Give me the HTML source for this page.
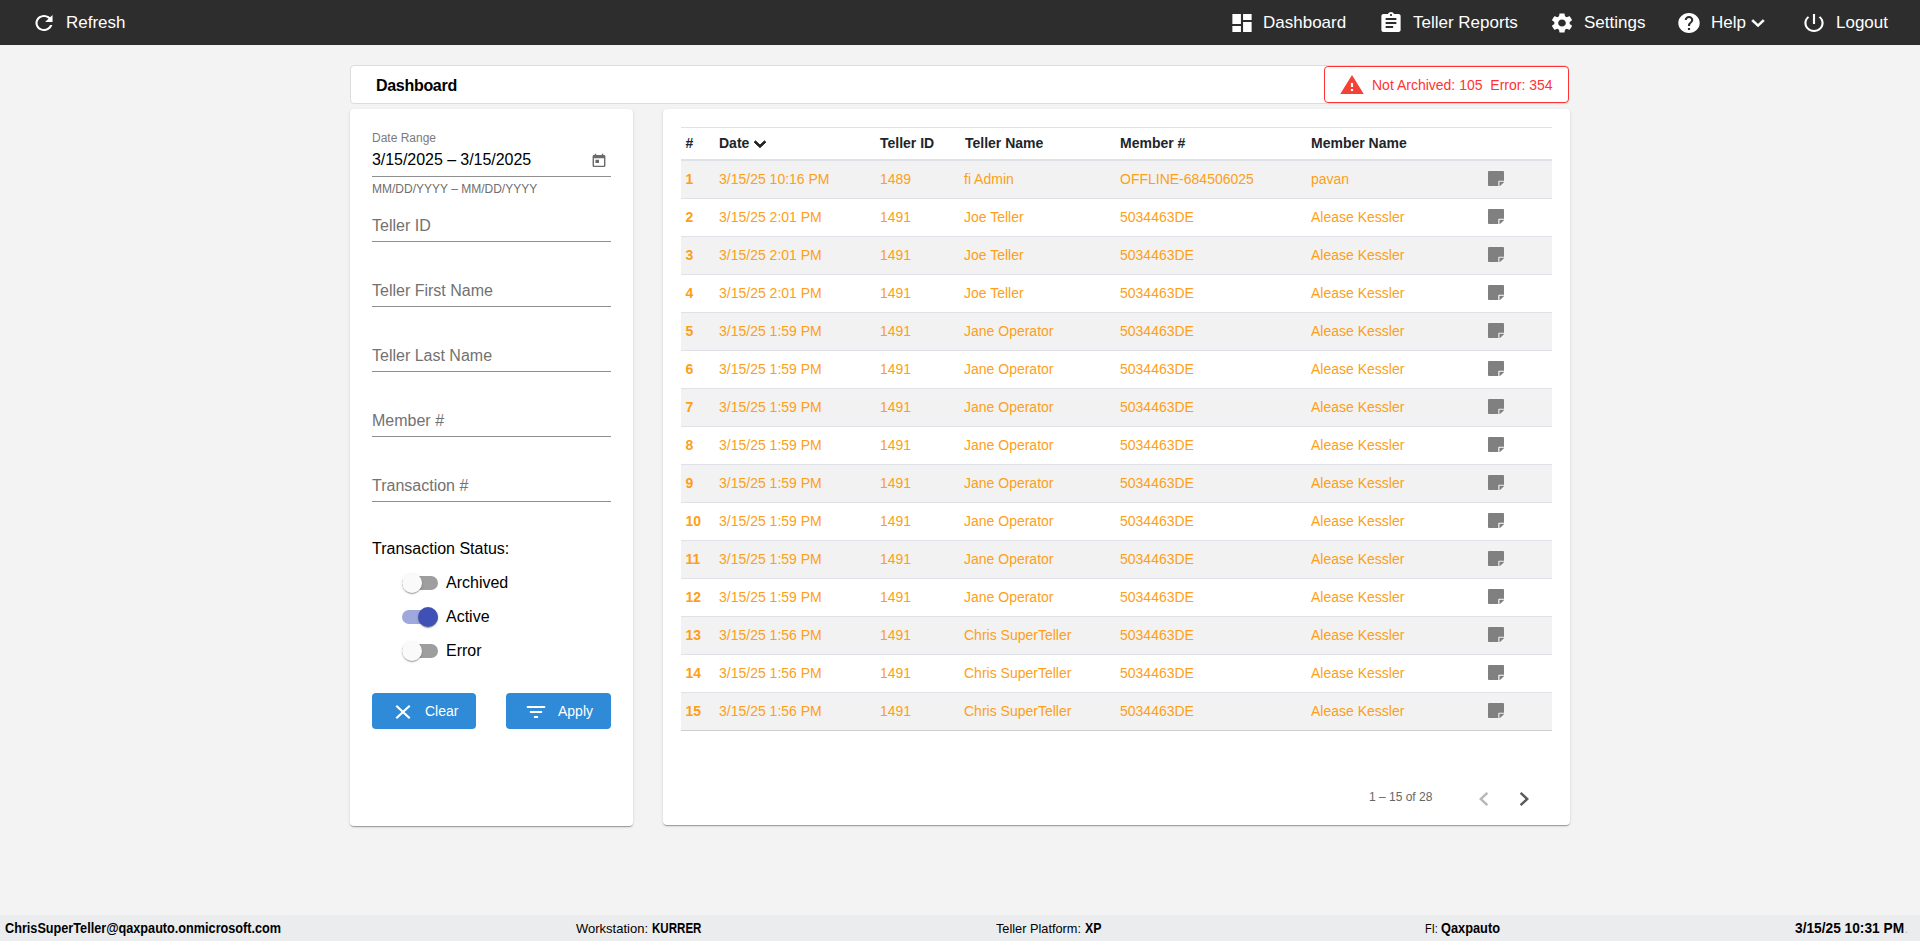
<!DOCTYPE html>
<html lang="en">
<head>
<meta charset="utf-8">
<title>Dashboard</title>
<style>
*{box-sizing:border-box;margin:0;padding:0}
html,body{width:1920px;height:941px;overflow:hidden}
body{background:#f3f3f3;font-family:"Liberation Sans",sans-serif;color:#000;position:relative}
svg{display:block;transform:scaleX(1.07)}
.abs{position:absolute}
/* top bar */
#top{position:absolute;left:0;top:0;width:1920px;height:45px;background:#2d2d2d;color:#fff;font-size:17px}
#top .item{position:absolute;top:0;height:45px;line-height:45px;white-space:nowrap}
#top svg{position:absolute;fill:#fff}
/* title */
#title{position:absolute;left:350px;top:65px;width:1219px;height:39px;background:#fff;border:1px solid #dcdcdc;border-radius:4px}
#title b{position:absolute;left:25px;top:10px;font-size:16px;line-height:20px;font-weight:700;letter-spacing:-.3px}
#alert{position:absolute;left:1324px;top:66px;width:245px;height:37px;background:#fff;border:1px solid #f33;border-radius:4px;color:#f33;font-size:14px;white-space:nowrap}
#alert span{position:absolute;left:47px;top:10px;line-height:16px}
/* cards */
.card{position:absolute;background:#fff;border-radius:4px;box-shadow:0 2px 1px -1px rgba(0,0,0,.2),0 1px 1px 0 rgba(0,0,0,.14),0 1px 3px 0 rgba(0,0,0,.12)}
#left{left:350px;top:109px;width:283px;height:717px}
#right{left:663px;top:109px;width:907px;height:716px}
.fl{position:absolute;left:22px;width:239px;border-bottom:1px solid #8f8f8f;color:#727272;font-size:16px;white-space:nowrap}
.fl span{position:absolute;left:0;line-height:18px}
/* toggles */
.tg{position:absolute;left:52px;width:36px;height:14px;border-radius:7px;background:#9e9e9e}
.tg i{position:absolute;left:0;top:-3px;width:20px;height:20px;border-radius:50%;background:#fafafa;box-shadow:0 2px 1px -1px rgba(0,0,0,.2),0 1px 1px 0 rgba(0,0,0,.14),0 1px 3px 0 rgba(0,0,0,.12)}
.tg.on{background:#9fa8da}
.tg.on i{left:16px;background:#3f51b5}
.tl{position:absolute;left:96px;font-size:16px;line-height:18px}
.btn{position:absolute;top:584px;height:36px;background:#2f8ad8;border-radius:4px;color:#fff;font-size:14px;line-height:36px}
.btn svg{position:absolute;top:7px;fill:#fff}
.btn span{position:absolute;top:0}
/* table */
#tb{position:absolute;left:18px;top:18px;width:871px;border-top:1px solid #dee2e6;font-size:14px}
.hr{position:relative;height:33px;border-bottom:2px solid #dee2e6;font-weight:700;color:#212529}
.r{position:relative;height:38px;border-bottom:1px solid #dee2e6;color:#fd9f18}
.r.s{background:#f2f2f2}
.r:last-child{border-bottom-color:#cfcfcf}
.hr span,.r span{position:absolute;top:0;line-height:37px;white-space:nowrap}
.hr span{line-height:31px}
.c1{left:4.5px;font-weight:700}.c2{left:38px}.c3{left:199px}.c4{left:283px}.c5{left:439px}.c6{left:630px}
.r svg{position:absolute;left:807px;top:10px;fill:#808080;transform:none}
/* footer */
#foot{position:absolute;left:0;top:915px;width:1920px;height:26px;background:#ebecee;font-size:13px;color:#000}
#foot span,#foot b{position:absolute;top:5px;line-height:16px;white-space:nowrap;transform-origin:0 50%}
#foot b{font-size:14px;font-weight:700}#foot span{top:6px}
</style>
</head>
<body>
<div id="top">
  <svg style="left:32px;top:11px" width="24" height="24" viewBox="0 0 24 24"><path d="M17.65 6.35C16.2 4.9 14.21 4 12 4c-4.42 0-7.99 3.58-7.990 8s3.570 8 7.990 8c3.730 0 6.840-2.550 7.730-6h-2.080c-.82 2.330-3.040 4-5.650 4-3.310 0-6-2.690-6-6s2.690-6 6-6c1.660 0 3.140.69 4.220 1.780L13 11h7V4l-2.350 2.350z"/></svg>
  <div class="item" style="left:66px">Refresh</div>

  <svg style="left:1229.6px;top:11px" width="24" height="24" viewBox="0 0 24 24"><path d="M3 13h8V3H3v10zm0 8h8v-6H3v6zm10 0h8V11h-8v10zm0-18v6h8V3h-8z"/></svg>
  <div class="item" style="left:1263px">Dashboard</div>

  <svg style="left:1379px;top:11px" width="24" height="24" viewBox="0 0 24 24"><path d="M19 3h-4.180C14.400 1.840 13.300 1 12 1c-1.300 0-2.400.84-2.820 2H5c-1.100 0-2 .9-2 2v14c0 1.100.9 2 2 2h14c1.100 0 2-.9 2-2V5c0-1.100-.9-2-2-2zm-7 0c.55 0 1 .45 1 1s-.45 1-1 1-1-.45-1-1 .45-1 1-1zm2 14H7v-2h7v2zm3-4H7v-2h10v2zm0-4H7V7h10v2z"/></svg>
  <div class="item" style="left:1413px">Teller Reports</div>

  <svg style="left:1549.6px;top:11px" width="24" height="24" viewBox="0 0 24 24"><path d="M19.140 12.940c.04-.3.060-.61.060-.94 0-.32-.02-.64-.07-.94l2.030-1.580c.18-.14.230-.41.120-.61l-1.920-3.320c-.12-.22-.37-.29-.59-.22l-2.390.96c-.5-.38-1.030-.7-1.620-.94l-.36-2.540c-.04-.24-.24-.41-.48-.41h-3.840c-.24 0-.43.170-.47.410l-.36 2.540c-.59.240-1.130.570-1.620.94l-2.390-.96c-.22-.08-.47 0-.59.220L2.740 8.870c-.12.210-.08.470.12.610l2.030 1.580c-.05.300-.09.630-.09.940s.02.640.07.940l-2.030 1.580c-.18.140-.23.410-.12.610l1.920 3.320c.12.220.37.290.59.220l2.390-.96c.5.380 1.030.7 1.620.94l.36 2.540c.05.240.24.410.48.410h3.840c.24 0 .44-.17.470-.41l.36-2.540c.59-.24 1.130-.56 1.620-.94l2.390.96c.22.080.47 0 .59-.22l1.920-3.320c.12-.22.070-.47-.12-.61l-2.010-1.580zM12 15.600c-1.980 0-3.600-1.620-3.600-3.600s1.620-3.600 3.600-3.600 3.600 1.620 3.600 3.600-1.620 3.600-3.600 3.600z"/></svg>
  <div class="item" style="left:1584px">Settings</div>

  <svg style="left:1677px;top:11px" width="24" height="24" viewBox="0 0 24 24"><path d="M12 2C6.480 2 2 6.480 2 12s4.480 10 10 10 10-4.480 10-10S17.520 2 12 2zm1 17h-2v-2h2v2zm2.070-7.750l-.9.920C13.450 12.900 13 13.500 13 15h-2v-.5c0-1.100.45-2.100 1.170-2.830l1.240-1.260c.37-.36.590-.86.590-1.410 0-1.100-.9-2-2-2s-2 .9-2 2H8c0-2.210 1.790-4 4-4s4 1.790 4 4c0 .88-.36 1.680-.930 2.250z"/></svg>
  <div class="item" style="left:1711px">Help</div>
  <svg style="left:1746px;top:11px" width="24" height="24" viewBox="0 0 24 24"><path stroke="#fff" stroke-width=".5" d="M16.590 8.590L12 13.170 7.410 8.590 6 10l6 6 6-6z"/></svg>

  <svg style="left:1802px;top:11px" width="24" height="24" viewBox="0 0 24 24"><path d="M13 3h-2v10h2V3zm4.830 2.170l-1.420 1.420C17.990 7.860 19 9.810 19 12c0 3.870-3.130 7-7 7s-7-3.130-7-7c0-2.190 1.010-4.140 2.580-5.420L6.170 5.170C4.230 6.820 3 9.260 3 12c0 4.970 4.030 9 9 9s9-4.030 9-9c0-2.740-1.230-5.180-3.170-6.830z"/></svg>
  <div class="item" style="left:1836px">Logout</div>
</div>

<div id="title"><b>Dashboard</b></div>
<div id="alert">
  <svg style="position:absolute;left:15px;top:6px;fill:#f44336" width="24" height="24" viewBox="0 0 24 24"><path d="M1 21h22L12 2 1 21zm12-3h-2v-2h2v2zm0-4h-2v-4h2v4z"/></svg>
  <span>Not Archived: 105&nbsp; Error: 354</span>
</div>

<div class="card" id="left">
  <div class="abs" style="left:22px;top:22px;font-size:12px;line-height:14px;color:#7b7b7b">Date Range</div>
  <div class="fl" style="top:40px;height:28px;color:#000"><span style="top:2px;letter-spacing:-.05px">3/15/2025 – 3/15/2025</span>
    <svg style="position:absolute;left:219px;top:4px;fill:#6b6b6b" width="16" height="16" viewBox="0 0 24 24"><path d="M19 3h-1V1h-2v2H8V1H6v2H5c-1.110 0-1.990.9-1.990 2L3 19c0 1.100.89 2 2 2h14c1.100 0 2-.9 2-2V5c0-1.100-.9-2-2-2zm0 16H5V8h14v11zM7 10h5v5H7z"/></svg>
  </div>
  <div class="abs" style="left:22px;top:73px;font-size:12px;line-height:14px;color:#6e6e6e;white-space:nowrap">MM/DD/YYYY – MM/DD/YYYY</div>
  <div class="fl" style="top:105px;height:28px"><span style="top:3px">Teller ID</span></div>
  <div class="fl" style="top:170px;height:28px"><span style="top:3px">Teller First Name</span></div>
  <div class="fl" style="top:235px;height:28px"><span style="top:3px">Teller Last Name</span></div>
  <div class="fl" style="top:300px;height:28px"><span style="top:3px">Member #</span></div>
  <div class="fl" style="top:365px;height:28px"><span style="top:3px">Transaction #</span></div>

  <div class="abs" style="left:22px;top:431px;font-size:16px;line-height:18px;white-space:nowrap">Transaction Status:</div>
  <div class="tg" style="top:467px"><i></i></div><div class="tl" style="top:465px">Archived</div>
  <div class="tg on" style="top:501px"><i></i></div><div class="tl" style="top:499px">Active</div>
  <div class="tg" style="top:535px"><i></i></div><div class="tl" style="top:533px">Error</div>

  <div class="btn" style="left:22px;width:104px">
    <svg style="left:19px;top:7px" width="24" height="24" viewBox="0 0 24 24"><path d="M19 6.410L17.590 5 12 10.590 6.410 5 5 6.410 10.590 12 5 17.590 6.410 19 12 13.410 17.590 19 19 17.590 13.410 12z"/></svg>
    <span style="left:53px">Clear</span>
  </div>
  <div class="btn" style="left:156px;width:105px">
    <svg style="left:18px;top:7px;transform:scaleX(1.02)" width="24" height="24" viewBox="0 0 24 24"><path d="M10 18h4v-2h-4v2zM3 6v2h18V6H3zm3 7h12v-2H6v2z"/></svg>
    <span style="left:52px">Apply</span>
  </div>
</div>

<div class="card" id="right">
  <div id="tb">
    <div class="hr"><span class="c1">#</span><span class="c2">Date</span>
      <svg style="position:absolute;left:68px;top:5px;fill:#212529" width="22" height="22" viewBox="0 0 24 24"><path d="M16.590 8.590L12 13.170 7.410 8.590 6 10l6 6 6-6z" stroke="#212529" stroke-width="1"/></svg>
      <span class="c3">Teller ID</span><span class="c4" style="left:284px">Teller Name</span><span class="c5">Member #</span><span class="c6">Member Name</span></div>
    <div class="r s"><span class="c1">1</span><span class="c2">3/15/25 10:16 PM</span><span class="c3">1489</span><span class="c4">fi Admin</span><span class="c5">OFFLINE-684506025</span><span class="c6">pavan</span><svg width="16" height="15" viewBox="0 32 448 448" preserveAspectRatio="none"><path d="M312 320h136V56c0-13.300-10.700-24-24-24H24C10.700 32 0 42.700 0 56v400c0 13.300 10.700 24 24 24h264V344c0-13.200 10.800-24 24-24zm129 55l-98 98c-4.500 4.500-10.600 7-17 7h-6V352h128v6.100c0 6.300-2.500 12.400-7 16.900z"/></svg></div>
    <div class="r"><span class="c1">2</span><span class="c2">3/15/25 2:01 PM</span><span class="c3">1491</span><span class="c4">Joe Teller</span><span class="c5">5034463DE</span><span class="c6">Alease Kessler</span><svg width="16" height="15" viewBox="0 32 448 448" preserveAspectRatio="none"><path d="M312 320h136V56c0-13.300-10.700-24-24-24H24C10.700 32 0 42.700 0 56v400c0 13.300 10.700 24 24 24h264V344c0-13.200 10.800-24 24-24zm129 55l-98 98c-4.500 4.500-10.600 7-17 7h-6V352h128v6.100c0 6.300-2.500 12.400-7 16.900z"/></svg></div>
    <div class="r s"><span class="c1">3</span><span class="c2">3/15/25 2:01 PM</span><span class="c3">1491</span><span class="c4">Joe Teller</span><span class="c5">5034463DE</span><span class="c6">Alease Kessler</span><svg width="16" height="15" viewBox="0 32 448 448" preserveAspectRatio="none"><path d="M312 320h136V56c0-13.300-10.700-24-24-24H24C10.700 32 0 42.700 0 56v400c0 13.300 10.700 24 24 24h264V344c0-13.200 10.800-24 24-24zm129 55l-98 98c-4.500 4.500-10.600 7-17 7h-6V352h128v6.100c0 6.300-2.500 12.400-7 16.900z"/></svg></div>
    <div class="r"><span class="c1">4</span><span class="c2">3/15/25 2:01 PM</span><span class="c3">1491</span><span class="c4">Joe Teller</span><span class="c5">5034463DE</span><span class="c6">Alease Kessler</span><svg width="16" height="15" viewBox="0 32 448 448" preserveAspectRatio="none"><path d="M312 320h136V56c0-13.300-10.700-24-24-24H24C10.700 32 0 42.700 0 56v400c0 13.300 10.700 24 24 24h264V344c0-13.200 10.800-24 24-24zm129 55l-98 98c-4.500 4.500-10.600 7-17 7h-6V352h128v6.100c0 6.300-2.500 12.400-7 16.900z"/></svg></div>
    <div class="r s"><span class="c1">5</span><span class="c2">3/15/25 1:59 PM</span><span class="c3">1491</span><span class="c4">Jane Operator</span><span class="c5">5034463DE</span><span class="c6">Alease Kessler</span><svg width="16" height="15" viewBox="0 32 448 448" preserveAspectRatio="none"><path d="M312 320h136V56c0-13.300-10.700-24-24-24H24C10.700 32 0 42.700 0 56v400c0 13.300 10.700 24 24 24h264V344c0-13.200 10.800-24 24-24zm129 55l-98 98c-4.500 4.500-10.600 7-17 7h-6V352h128v6.100c0 6.300-2.500 12.400-7 16.900z"/></svg></div>
    <div class="r"><span class="c1">6</span><span class="c2">3/15/25 1:59 PM</span><span class="c3">1491</span><span class="c4">Jane Operator</span><span class="c5">5034463DE</span><span class="c6">Alease Kessler</span><svg width="16" height="15" viewBox="0 32 448 448" preserveAspectRatio="none"><path d="M312 320h136V56c0-13.300-10.700-24-24-24H24C10.700 32 0 42.700 0 56v400c0 13.300 10.700 24 24 24h264V344c0-13.200 10.800-24 24-24zm129 55l-98 98c-4.500 4.500-10.600 7-17 7h-6V352h128v6.100c0 6.300-2.500 12.400-7 16.900z"/></svg></div>
    <div class="r s"><span class="c1">7</span><span class="c2">3/15/25 1:59 PM</span><span class="c3">1491</span><span class="c4">Jane Operator</span><span class="c5">5034463DE</span><span class="c6">Alease Kessler</span><svg width="16" height="15" viewBox="0 32 448 448" preserveAspectRatio="none"><path d="M312 320h136V56c0-13.300-10.700-24-24-24H24C10.700 32 0 42.700 0 56v400c0 13.300 10.700 24 24 24h264V344c0-13.200 10.800-24 24-24zm129 55l-98 98c-4.500 4.500-10.600 7-17 7h-6V352h128v6.100c0 6.300-2.500 12.400-7 16.900z"/></svg></div>
    <div class="r"><span class="c1">8</span><span class="c2">3/15/25 1:59 PM</span><span class="c3">1491</span><span class="c4">Jane Operator</span><span class="c5">5034463DE</span><span class="c6">Alease Kessler</span><svg width="16" height="15" viewBox="0 32 448 448" preserveAspectRatio="none"><path d="M312 320h136V56c0-13.300-10.700-24-24-24H24C10.700 32 0 42.700 0 56v400c0 13.300 10.700 24 24 24h264V344c0-13.200 10.800-24 24-24zm129 55l-98 98c-4.500 4.500-10.600 7-17 7h-6V352h128v6.100c0 6.300-2.500 12.400-7 16.900z"/></svg></div>
    <div class="r s"><span class="c1">9</span><span class="c2">3/15/25 1:59 PM</span><span class="c3">1491</span><span class="c4">Jane Operator</span><span class="c5">5034463DE</span><span class="c6">Alease Kessler</span><svg width="16" height="15" viewBox="0 32 448 448" preserveAspectRatio="none"><path d="M312 320h136V56c0-13.300-10.700-24-24-24H24C10.700 32 0 42.700 0 56v400c0 13.300 10.700 24 24 24h264V344c0-13.200 10.800-24 24-24zm129 55l-98 98c-4.500 4.500-10.600 7-17 7h-6V352h128v6.100c0 6.300-2.500 12.400-7 16.900z"/></svg></div>
    <div class="r"><span class="c1">10</span><span class="c2">3/15/25 1:59 PM</span><span class="c3">1491</span><span class="c4">Jane Operator</span><span class="c5">5034463DE</span><span class="c6">Alease Kessler</span><svg width="16" height="15" viewBox="0 32 448 448" preserveAspectRatio="none"><path d="M312 320h136V56c0-13.300-10.700-24-24-24H24C10.700 32 0 42.700 0 56v400c0 13.300 10.700 24 24 24h264V344c0-13.200 10.800-24 24-24zm129 55l-98 98c-4.500 4.500-10.600 7-17 7h-6V352h128v6.100c0 6.300-2.500 12.400-7 16.900z"/></svg></div>
    <div class="r s"><span class="c1">11</span><span class="c2">3/15/25 1:59 PM</span><span class="c3">1491</span><span class="c4">Jane Operator</span><span class="c5">5034463DE</span><span class="c6">Alease Kessler</span><svg width="16" height="15" viewBox="0 32 448 448" preserveAspectRatio="none"><path d="M312 320h136V56c0-13.300-10.700-24-24-24H24C10.700 32 0 42.700 0 56v400c0 13.300 10.700 24 24 24h264V344c0-13.200 10.800-24 24-24zm129 55l-98 98c-4.500 4.500-10.600 7-17 7h-6V352h128v6.100c0 6.300-2.500 12.400-7 16.900z"/></svg></div>
    <div class="r"><span class="c1">12</span><span class="c2">3/15/25 1:59 PM</span><span class="c3">1491</span><span class="c4">Jane Operator</span><span class="c5">5034463DE</span><span class="c6">Alease Kessler</span><svg width="16" height="15" viewBox="0 32 448 448" preserveAspectRatio="none"><path d="M312 320h136V56c0-13.300-10.700-24-24-24H24C10.700 32 0 42.700 0 56v400c0 13.300 10.700 24 24 24h264V344c0-13.200 10.800-24 24-24zm129 55l-98 98c-4.500 4.500-10.600 7-17 7h-6V352h128v6.100c0 6.300-2.500 12.400-7 16.900z"/></svg></div>
    <div class="r s"><span class="c1">13</span><span class="c2">3/15/25 1:56 PM</span><span class="c3">1491</span><span class="c4">Chris SuperTeller</span><span class="c5">5034463DE</span><span class="c6">Alease Kessler</span><svg width="16" height="15" viewBox="0 32 448 448" preserveAspectRatio="none"><path d="M312 320h136V56c0-13.300-10.700-24-24-24H24C10.700 32 0 42.700 0 56v400c0 13.300 10.700 24 24 24h264V344c0-13.200 10.800-24 24-24zm129 55l-98 98c-4.500 4.500-10.600 7-17 7h-6V352h128v6.100c0 6.300-2.500 12.400-7 16.900z"/></svg></div>
    <div class="r"><span class="c1">14</span><span class="c2">3/15/25 1:56 PM</span><span class="c3">1491</span><span class="c4">Chris SuperTeller</span><span class="c5">5034463DE</span><span class="c6">Alease Kessler</span><svg width="16" height="15" viewBox="0 32 448 448" preserveAspectRatio="none"><path d="M312 320h136V56c0-13.300-10.700-24-24-24H24C10.700 32 0 42.700 0 56v400c0 13.300 10.700 24 24 24h264V344c0-13.200 10.800-24 24-24zm129 55l-98 98c-4.500 4.500-10.600 7-17 7h-6V352h128v6.100c0 6.300-2.500 12.400-7 16.900z"/></svg></div>
    <div class="r s"><span class="c1">15</span><span class="c2">3/15/25 1:56 PM</span><span class="c3">1491</span><span class="c4">Chris SuperTeller</span><span class="c5">5034463DE</span><span class="c6">Alease Kessler</span><svg width="16" height="15" viewBox="0 32 448 448" preserveAspectRatio="none"><path d="M312 320h136V56c0-13.300-10.700-24-24-24H24C10.700 32 0 42.700 0 56v400c0 13.300 10.700 24 24 24h264V344c0-13.200 10.800-24 24-24zm129 55l-98 98c-4.500 4.500-10.600 7-17 7h-6V352h128v6.100c0 6.300-2.500 12.400-7 16.900z"/></svg></div>
  </div>
  <div class="abs" style="left:706px;top:681px;font-size:12px;line-height:14px;color:#666;white-space:nowrap">1 – 15 of 28</div>
  <svg class="abs" style="left:807.3px;top:676.2px;fill:#b8b8b8" width="28" height="28" viewBox="0 0 24 24"><path d="M15.410 7.410L14 6l-6 6 6 6 1.410-1.410L10.830 12z"/></svg>
  <svg class="abs" style="left:846.7px;top:676.2px;fill:#5a5a5a" width="28" height="28" viewBox="0 0 24 24"><path d="M10 6L8.590 7.410 13.170 12l-4.580 4.590L10 18l6-6z"/></svg>
</div>

<div id="foot">
  <b style="left:5px;transform:scaleX(.905)">ChrisSuperTeller@qaxpauto.onmicrosoft.com</b>
  <span style="left:576px">Workstation:</span><b style="left:652px;transform:scaleX(.826)">KURRER</b>
  <span style="left:996px;transform:scaleX(.98)">Teller Platform:</span><b style="left:1085px;transform:scaleX(.883)">XP</b>
  <span style="left:1425px;transform:scaleX(.85)">FI:</span><b style="left:1441px;transform:scaleX(.913)">Qaxpauto</b>
  <b style="left:1795px;transform:scaleX(.98)">3/15/25 10:31 PM</b><span style="left:1905px;color:#a9b1bd;font-size:11px">.</span>
</div>
</body>
</html>
